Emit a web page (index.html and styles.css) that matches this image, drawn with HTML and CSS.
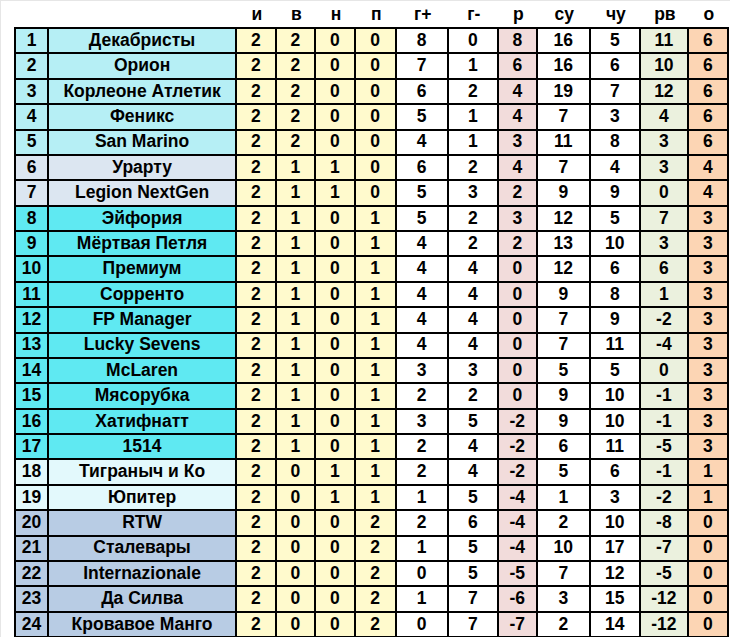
FILE: index.html
```html
<!DOCTYPE html>
<html lang="ru">
<head>
<meta charset="utf-8">
<title>Таблица</title>
<link rel="stylesheet" href="styles.css">
</head>
<body>
<div class="page">
<table class="standings">
  <thead>
    <tr>
      <th class="c-rank"></th><th class="c-name"></th>
      <th class="c-n">и</th><th class="c-n">в</th><th class="c-n">н</th><th class="c-p">п</th>
      <th class="c-g">г+</th><th class="c-g2">г-</th><th class="c-r">р</th>
      <th class="c-su">су</th><th class="c-g2">чу</th><th class="c-rv">рв</th><th class="c-o">о</th>
    </tr>
  </thead>
  <tbody>
    <tr class="g1 first"><td>1</td><td>Декабристы</td><td class="y">2</td><td class="y">2</td><td class="y">0</td><td class="y">0</td><td>8</td><td>0</td><td class="pk">8</td><td>16</td><td>5</td><td class="gr">11</td><td class="or">6</td></tr>
    <tr class="g1"><td>2</td><td>Орион</td><td class="y">2</td><td class="y">2</td><td class="y">0</td><td class="y">0</td><td>7</td><td>1</td><td class="pk">6</td><td>16</td><td>6</td><td class="gr">10</td><td class="or">6</td></tr>
    <tr class="g1"><td>3</td><td>Корлеоне Атлетик</td><td class="y">2</td><td class="y">2</td><td class="y">0</td><td class="y">0</td><td>6</td><td>2</td><td class="pk">4</td><td>19</td><td>7</td><td class="gr">12</td><td class="or">6</td></tr>
    <tr class="g1"><td>4</td><td>Феникс</td><td class="y">2</td><td class="y">2</td><td class="y">0</td><td class="y">0</td><td>5</td><td>1</td><td class="pk">4</td><td>7</td><td>3</td><td class="gr">4</td><td class="or">6</td></tr>
    <tr class="g1"><td>5</td><td>San Marino</td><td class="y">2</td><td class="y">2</td><td class="y">0</td><td class="y">0</td><td>4</td><td>1</td><td class="pk">3</td><td>11</td><td>8</td><td class="gr">3</td><td class="or">6</td></tr>
    <tr class="g2"><td>6</td><td>Урарту</td><td class="y">2</td><td class="y">1</td><td class="y">1</td><td class="y">0</td><td>6</td><td>2</td><td class="pk">4</td><td>7</td><td>4</td><td class="gr">3</td><td class="or">4</td></tr>
    <tr class="g2"><td>7</td><td>Legion NextGen</td><td class="y">2</td><td class="y">1</td><td class="y">1</td><td class="y">0</td><td>5</td><td>3</td><td class="pk">2</td><td>9</td><td>9</td><td class="gr">0</td><td class="or">4</td></tr>
    <tr class="g3"><td>8</td><td>Эйфория</td><td class="y">2</td><td class="y">1</td><td class="y">0</td><td class="y">1</td><td>5</td><td>2</td><td class="pk">3</td><td>12</td><td>5</td><td class="gr">7</td><td class="or">3</td></tr>
    <tr class="g3"><td>9</td><td>Мёртвая Петля</td><td class="y">2</td><td class="y">1</td><td class="y">0</td><td class="y">1</td><td>4</td><td>2</td><td class="pk">2</td><td>13</td><td>10</td><td class="gr">3</td><td class="or">3</td></tr>
    <tr class="g3"><td>10</td><td>Премиум</td><td class="y">2</td><td class="y">1</td><td class="y">0</td><td class="y">1</td><td>4</td><td>4</td><td class="pk">0</td><td>12</td><td>6</td><td class="gr">6</td><td class="or">3</td></tr>
    <tr class="g3"><td>11</td><td>Сорренто</td><td class="y">2</td><td class="y">1</td><td class="y">0</td><td class="y">1</td><td>4</td><td>4</td><td class="pk">0</td><td>9</td><td>8</td><td class="gr">1</td><td class="or">3</td></tr>
    <tr class="g3"><td>12</td><td>FP Manager</td><td class="y">2</td><td class="y">1</td><td class="y">0</td><td class="y">1</td><td>4</td><td>4</td><td class="pk">0</td><td>7</td><td>9</td><td class="gr">-2</td><td class="or">3</td></tr>
    <tr class="g3"><td>13</td><td>Lucky Sevens</td><td class="y">2</td><td class="y">1</td><td class="y">0</td><td class="y">1</td><td>4</td><td>4</td><td class="pk">0</td><td>7</td><td>11</td><td class="gr">-4</td><td class="or">3</td></tr>
    <tr class="g3"><td>14</td><td>McLaren</td><td class="y">2</td><td class="y">1</td><td class="y">0</td><td class="y">1</td><td>3</td><td>3</td><td class="pk">0</td><td>5</td><td>5</td><td class="gr">0</td><td class="or">3</td></tr>
    <tr class="g3"><td>15</td><td>Мясорубка</td><td class="y">2</td><td class="y">1</td><td class="y">0</td><td class="y">1</td><td>2</td><td>2</td><td class="pk">0</td><td>9</td><td>10</td><td class="gr">-1</td><td class="or">3</td></tr>
    <tr class="g3"><td>16</td><td>Хатифнатт</td><td class="y">2</td><td class="y">1</td><td class="y">0</td><td class="y">1</td><td>3</td><td>5</td><td class="pk">-2</td><td>9</td><td>10</td><td class="gr">-1</td><td class="or">3</td></tr>
    <tr class="g3"><td>17</td><td>1514</td><td class="y">2</td><td class="y">1</td><td class="y">0</td><td class="y">1</td><td>2</td><td>4</td><td class="pk">-2</td><td>6</td><td>11</td><td class="gr">-5</td><td class="or">3</td></tr>
    <tr class="g4"><td>18</td><td>Тиграныч и Ко</td><td class="y">2</td><td class="y">0</td><td class="y">1</td><td class="y">1</td><td>2</td><td>4</td><td class="pk">-2</td><td>5</td><td>6</td><td class="gr">-1</td><td class="or">1</td></tr>
    <tr class="g4"><td>19</td><td>Юпитер</td><td class="y">2</td><td class="y">0</td><td class="y">1</td><td class="y">1</td><td>1</td><td>5</td><td class="pk">-4</td><td>1</td><td>3</td><td class="gr">-2</td><td class="or">1</td></tr>
    <tr class="g5"><td>20</td><td>RTW</td><td class="y">2</td><td class="y">0</td><td class="y">0</td><td class="y">2</td><td>2</td><td>6</td><td class="pk">-4</td><td>2</td><td>10</td><td class="gr">-8</td><td class="or">0</td></tr>
    <tr class="g5"><td>21</td><td>Сталевары</td><td class="y">2</td><td class="y">0</td><td class="y">0</td><td class="y">2</td><td>1</td><td>5</td><td class="pk">-4</td><td>10</td><td>17</td><td class="gr">-7</td><td class="or">0</td></tr>
    <tr class="g5"><td>22</td><td>Internazionale</td><td class="y">2</td><td class="y">0</td><td class="y">0</td><td class="y">2</td><td>0</td><td>5</td><td class="pk">-5</td><td>7</td><td>12</td><td class="gr">-5</td><td class="or">0</td></tr>
    <tr class="g5"><td>23</td><td>Да Силва</td><td class="y">2</td><td class="y">0</td><td class="y">0</td><td class="y">2</td><td>1</td><td>7</td><td class="pk">-6</td><td>3</td><td>15</td><td class="gr">-12</td><td class="or">0</td></tr>
    <tr class="g5"><td>24</td><td>Кровавое Манго</td><td class="y">2</td><td class="y">0</td><td class="y">0</td><td class="y">2</td><td>0</td><td>7</td><td class="pk">-7</td><td>2</td><td>14</td><td class="gr">-12</td><td class="or">0</td></tr>
  </tbody>
</table>
</div>
</body>
</html>
```

FILE: styles.css
```css
html, body {
  margin: 0;
  padding: 0;
  background: #ffffff;
}

.page {
  width: 730px;
  height: 637px;
  box-sizing: border-box;
  border-top: 1px solid #e6e6e6;
  border-left: 1px solid #e6e6e6;
  padding-left: 13px;
}

.standings {
  border-collapse: separate;
  border-spacing: 0;
  table-layout: fixed;
  width: 715px;
  font-family: "Liberation Sans", Arial, sans-serif;
  font-weight: bold;
  font-size: 17.5px;
  color: #000;
}

.standings th,
.standings td {
  box-sizing: border-box;
  padding: 0;
  text-align: center;
  vertical-align: middle;
  white-space: nowrap;
  line-height: 1;
}

.standings thead tr {
  height: 26px;
}

.standings th {
  font-weight: bold;
  padding-top: 2px;
}

.c-rank { width: 35px; }
.c-name { width: 188px; }
.c-n { width: 39.5px; }
.c-p { width: 41px; }
.c-g { width: 52px; }
.c-g2 { width: 50px; }
.c-r { width: 39px; }
.c-su { width: 53px; }
.c-rv { width: 48px; }
.c-o { width: 40px; }

.standings tbody tr {
  height: 25.38px;
}

.standings tbody tr.first {
  height: 27.38px;
}

.standings td {
  border-right: 2px solid #000;
  border-bottom: 2px solid #000;
  background: #ffffff;
}

.standings td:first-child {
  border-left: 2px solid #000;
}

.standings tr.first td {
  border-top: 2px solid #000;
}

.g1 td:nth-child(-n+2) { background: #b6eff5; }
.g2 td:nth-child(-n+2) { background: #dce6f1; }
.g3 td:nth-child(-n+2) { background: #5fe9f2; }
.g4 td:nth-child(-n+2) { background: #e3f9fc; }
.g5 td:nth-child(-n+2) { background: #b8cce4; }

.standings td.y { background: #fffacd; }
.standings td.pk { background: #f2dcdb; }
.standings td.gr { background: #ebf1de; }
.standings td.or { background: #fcd5b4; }
```
